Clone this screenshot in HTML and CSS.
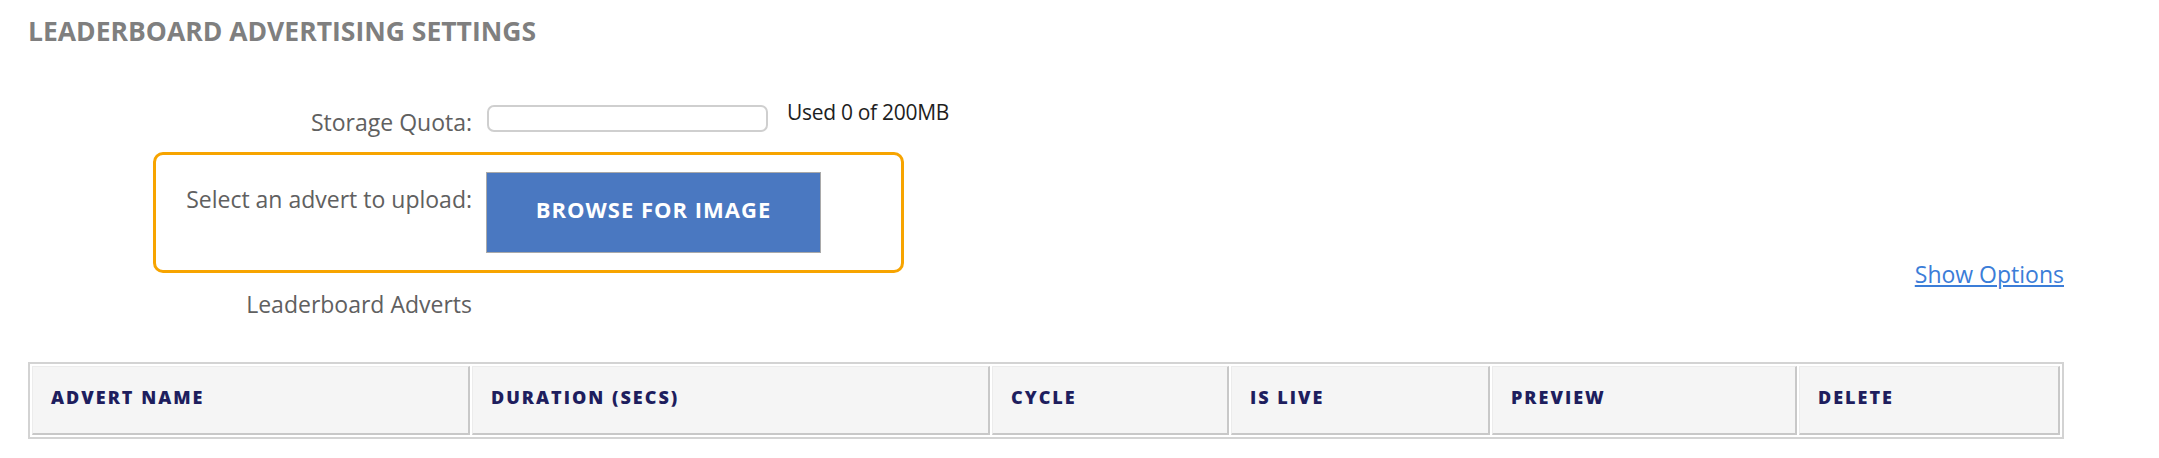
FILE: index.html
```html
<!DOCTYPE html>
<html lang="en">
<head>
<meta charset="utf-8">
<title>Leaderboard Advertising Settings</title>
<link rel="stylesheet" href="styles.css">
</head>
<body>
<main class="page">
  <h1 class="page-title">LEADERBOARD ADVERTISING SETTINGS</h1>
  <div class="settings">
    <div class="form">
      <div class="form-row quota-row">
        <span class="form-label">Storage Quota:</span>
        <div class="quota">
          <div class="quota-bar"></div>
          <span class="quota-text">Used 0 of 200MB</span>
        </div>
      </div>
      <div class="form-row upload-row">
        <span class="form-label">Select an advert to upload:</span>
        <button class="browse-btn" type="button">BROWSE FOR IMAGE</button>
      </div>
      <div class="form-row list-row">
        <span class="form-label">Leaderboard Adverts</span>
      </div>
    </div>
    <div class="aside">
      <a class="show-options" href="#">Show Options</a>
    </div>
  </div>
  <table class="adverts">
    <thead>
      <tr>
        <th class="col-name">ADVERT NAME</th>
        <th class="col-duration">DURATION (SECS)</th>
        <th class="col-cycle">CYCLE</th>
        <th class="col-live">IS LIVE</th>
        <th class="col-preview">PREVIEW</th>
        <th class="col-delete">DELETE</th>
      </tr>
    </thead>
  </table>
</main>
</body>
</html>
```

FILE: styles.css
```css
* { box-sizing: border-box; }
html, body { margin: 0; background: #fff; }
body { font-family: "Open Sans", "Liberation Sans", sans-serif; }

.page { padding: 13px 95px 0 28px; }

.page-title {
  margin: 0 0 50px;
  font-size: 26.5px;
  line-height: 36px;
  font-weight: 700;
  color: #7f7f7f;
}

.settings { display: flex; justify-content: space-between; }

.form { margin-left: 125px; width: 751px; }

.form-row {
  display: grid;
  grid-template-columns: 319px 1fr;
  column-gap: 15px;
  align-items: start;
}

.form-label {
  text-align: right;
  font-size: 23px;
  line-height: 30px;
  color: #606060;
  white-space: nowrap;
}

.quota-row .form-label { margin-top: 7.5px; }

.quota { display: flex; align-items: flex-start; gap: 19px; }

.quota-bar {
  flex: 0 0 281px;
  height: 27px;
  margin-top: 6px;
  border: 2px solid #cfcfcf;
  border-radius: 7px;
}

.quota-text {
  flex: 0 0 auto;
  white-space: nowrap;
  font-size: 21px;
  line-height: 26px;
  color: #1e1e1e;
  letter-spacing: -0.3px;
}

.upload-row {
  margin-top: 15.5px;
  border: 3px solid #f7a400;
  border-radius: 10px;
  padding: 17px 0;
  grid-template-columns: 316px 335px;
  column-gap: 14px;
}

.upload-row .form-label { margin-top: 12px; }

.browse-btn {
  display: flex;
  align-items: center;
  justify-content: center;
  width: 335px;
  height: 81px;
  padding: 0 0 7px;
  border: 1px solid #a9a9a9;
  background: #4a78c1;
  color: #fff;
  font-family: inherit;
  font-weight: 700;
  font-size: 22px;
  letter-spacing: 1px;
}

.list-row { margin-top: 16px; }

.aside {
  display: flex;
  flex-direction: column;
  justify-content: flex-end;
  padding-bottom: 30px;
}

.show-options {
  font-size: 23px;
  line-height: 30px;
  color: #3b7dd8;
  text-decoration: underline;
}

.adverts {
  margin-top: 42.5px;
  width: 100%;
  table-layout: fixed;
  border: 2px solid #d3d3d3;
  border-spacing: 2px;
}

.adverts th {
  height: 69px;
  padding: 0 0 5px 18px;
  vertical-align: middle;
  text-align: left;
  background: #f5f5f5;
  border-style: solid;
  border-width: 1px 2px 2px 1px;
  border-color: #ececec #c8c8c8 #c8c8c8 #ececec;
  font-size: 18px;
  font-weight: 800;
  letter-spacing: 2px;
  color: #1e1e5e;
}

.col-name { width: 438px; }
.col-duration { width: 518px; }
.col-cycle { width: 237px; }
.col-live { width: 259px; }
.col-preview { width: 305px; }
.col-delete { width: 261px; }
```
